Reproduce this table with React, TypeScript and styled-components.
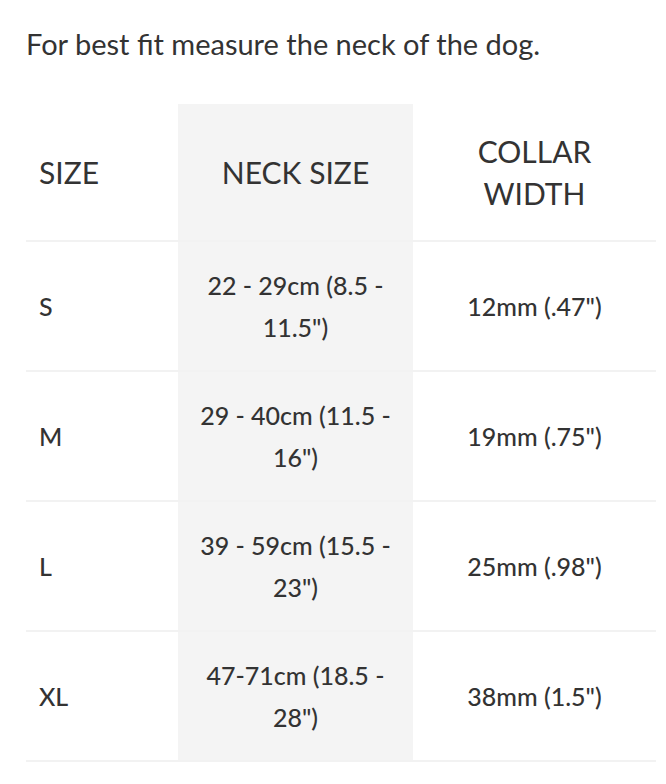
import { createGlobalStyle, styled } from 'styled-components';

const GlobalStyle = createGlobalStyle`
    body {
        margin: 0;
        background: #fff;
        font-family: Lato, 'Liberation Sans', sans-serif;
        color: #333;
    }
`;

const Page = styled.div`
    padding: 24px 10px 24px 26px;
`;

const Intro = styled.p`
    margin: 0;
    font-size: 29px;
    line-height: 40px;
`;

const SizeTable = styled.table`
    margin-top: 40px;
    width: 630px;
    table-layout: fixed;
    border-collapse: collapse;
`;

const Col = styled.col<{ $highlight?: boolean }>`
    background: ${p => (p.$highlight ? '#f4f4f4' : 'transparent')};
`;

const HeadCell = styled.th<{ $align?: 'left' | 'center' }>`
    height: 136px;
    padding: 0 13px;
    font-size: 30px;
    font-weight: 400;
    line-height: 42px;
    text-align: ${p => p.$align ?? 'center'};
    vertical-align: middle;
    border-bottom: 2px solid #f2f2f2;
`;

const Cell = styled.td<{ $align?: 'left' | 'center' }>`
    height: 128px;
    padding: 0 13px;
    font-size: 25px;
    font-weight: 500;
    line-height: 42px;
    text-align: ${p => p.$align ?? 'center'};
    vertical-align: middle;
    border-bottom: 2px solid #f2f2f2;
`;

const rows = [
    { size: 'S', neck: '22 - 29cm (8.5 - 11.5")', width: '12mm (.47")' },
    { size: 'M', neck: '29 - 40cm (11.5 - 16")', width: '19mm (.75")' },
    { size: 'L', neck: '39 - 59cm (15.5 - 23")', width: '25mm (.98")' },
    { size: 'XL', neck: '47-71cm (18.5 - 28")', width: '38mm (1.5")' },
];

export default function App() {
    return (
        <Page>
            <GlobalStyle />
            <Intro>For best fit measure the neck of the dog.</Intro>
            <SizeTable>
                <colgroup>
                    <Col style={{ width: 152 }} />
                    <Col $highlight style={{ width: 235 }} />
                    <Col />
                </colgroup>
                <thead>
                    <tr>
                        <HeadCell $align="left">SIZE</HeadCell>
                        <HeadCell>NECK SIZE</HeadCell>
                        <HeadCell>
                            COLLAR
                            <br />
                            WIDTH
                        </HeadCell>
                    </tr>
                </thead>
                <tbody>
                    {rows.map(r => (
                        <tr key={r.size}>
                            <Cell $align="left">{r.size}</Cell>
                            <Cell>{r.neck}</Cell>
                            <Cell>{r.width}</Cell>
                        </tr>
                    ))}
                </tbody>
            </SizeTable>
        </Page>
    );
}
